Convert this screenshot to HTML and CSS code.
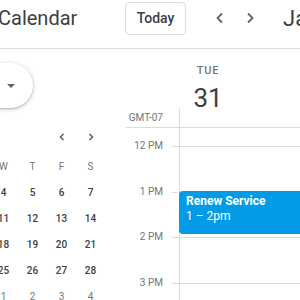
FILE: index.html
```html
<!DOCTYPE html>
<html lang="en">

<head>
    <meta charset="UTF-8">
    <meta name="viewport" content="width=device-width, initial-scale=1.0">
    <title>Calendar - Day view</title>
    <link rel="stylesheet" href="styles.css">
</head>

<body>
    <header class="topbar">
        <span class="app-name">Calendar</span>
        <button class="today-btn" type="button">Today</button>
        <nav class="nav-arrows">
            <button class="icon-btn" type="button" aria-label="Previous day">
                <svg width="12" height="12" viewBox="0 0 12 12"><path d="M8 1.5 3.5 6 8 10.5" fill="none" stroke="#5f6368" stroke-width="1.8"/></svg>
            </button>
            <button class="icon-btn" type="button" aria-label="Next day">
                <svg width="12" height="12" viewBox="0 0 12 12"><path d="M4 1.5 8.5 6 4 10.5" fill="none" stroke="#5f6368" stroke-width="1.8"/></svg>
            </button>
        </nav>
        <span class="period">January 31, 2017</span>
    </header>

    <div class="layout">
        <aside class="sidebar">
            <button class="create-btn" type="button">
                <span class="create-label">Create</span>
                <span class="create-caret"></span>
            </button>

            <div class="mini-cal">
                <div class="mini-head">
                    <span class="mini-title">January 2017</span>
                    <button class="mini-arrow" type="button" aria-label="Previous month">
                        <svg width="8" height="8" viewBox="0 0 8 8"><path d="M5.5 1 2.5 4 5.5 7" fill="none" stroke="#5f6368" stroke-width="1.5"/></svg>
                    </button>
                    <button class="mini-arrow" type="button" aria-label="Next month">
                        <svg width="8" height="8" viewBox="0 0 8 8"><path d="M2.5 1 5.5 4 2.5 7" fill="none" stroke="#5f6368" stroke-width="1.5"/></svg>
                    </button>
                </div>
                <div class="mini-grid">
                    <span class="dow">S</span><span class="dow">M</span><span class="dow">T</span><span class="dow">W</span><span class="dow">T</span><span class="dow">F</span><span class="dow">S</span>
                    <span>1</span><span>2</span><span>3</span><span>4</span><span>5</span><span>6</span><span>7</span>
                    <span>8</span><span>9</span><span>10</span><span>11</span><span>12</span><span>13</span><span>14</span>
                    <span>15</span><span>16</span><span>17</span><span>18</span><span>19</span><span>20</span><span>21</span>
                    <span>22</span><span>23</span><span>24</span><span>25</span><span>26</span><span>27</span><span>28</span>
                    <span>29</span><span>30</span><span class="today">31</span><span class="other">1</span><span class="other">2</span><span class="other">3</span><span class="other">4</span>
                </div>
            </div>
        </aside>

        <main class="day-view">
            <div class="day-head">
                <div class="day-label">
                    <div class="day-dow">TUE</div>
                    <div class="day-num">31</div>
                </div>
            </div>

            <div class="allday">
                <div class="tz">GMT-07</div>
                <div class="allday-cell"></div>
            </div>

            <div class="grid">
                <div class="time-gutter">
                    <div class="hour"><span class="hour-label">12 PM</span><span class="tick"></span></div>
                    <div class="hour"><span class="hour-label">1 PM</span><span class="tick"></span></div>
                    <div class="hour"><span class="hour-label">2 PM</span><span class="tick"></span></div>
                    <div class="hour"><span class="hour-label">3 PM</span><span class="tick"></span></div>
                </div>
                <div class="day-col">
                    <div class="slot"></div>
                    <div class="slot"></div>
                    <div class="slot"></div>
                    <div class="slot"></div>
                    <div class="event">
                        <div class="event-title">Renew Service</div>
                        <div class="event-time">1 – 2pm</div>
                    </div>
                </div>
            </div>
        </main>
    </div>
</body>

</html>
```

FILE: styles.css
```css
:root {
    --text-main: #3c4043;
    --text-soft: #70757a;
    --line: #dadce0;
    --event-blue: #039be5;
}

* {
    margin: 0;
    padding: 0;
    box-sizing: border-box;
}

html,
body {
    width: 300px;
    height: 300px;
    overflow: hidden;
    background: #ffffff;
}

body {
    font-family: Roboto, "Liberation Sans", Arial, sans-serif;
    color: var(--text-main);
}

button {
    font-family: inherit;
    background: none;
    border: none;
    cursor: pointer;
}

/* top bar */
.topbar {
    display: flex;
    align-items: center;
    height: 49px;
    padding-bottom: 12px;
    border-bottom: 1px solid var(--line);
    white-space: nowrap;
}

.app-name {
    flex: 0 0 127px;
    margin-left: -2px;
    font-size: 20px;
    color: var(--text-main);
}

.today-btn {
    flex: 0 0 61px;
    height: 33px;
    border: 1px solid var(--line);
    border-radius: 4px;
    font-size: 14px;
    font-weight: 500;
    color: var(--text-main);
}

.nav-arrows {
    display: flex;
    gap: 2px;
    margin-left: 20px;
}

.icon-btn {
    width: 28px;
    height: 28px;
    display: flex;
    align-items: center;
    justify-content: center;
}

.period {
    margin-left: 19px;
    font-size: 22px;
    color: var(--text-main);
}

/* body */
.layout {
    display: flex;
}

.sidebar {
    flex: 0 0 126px;
}

.create-btn {
    display: flex;
    align-items: center;
    justify-content: flex-end;
    width: 100px;
    height: 45px;
    margin: 14px 0 0 -67px;
    padding-right: 18px;
    border-radius: 24px;
    background: #ffffff;
    box-shadow: 0 1px 2px rgba(60, 64, 67, 0.3), 0 1px 4px 1px rgba(60, 64, 67, 0.15);
}

.create-label {
    display: none;
}

.create-caret {
    width: 0;
    height: 0;
    border-left: 4px solid transparent;
    border-right: 4px solid transparent;
    border-top: 4px solid #5f6368;
}

.mini-cal {
    width: 203px;
    margin: 15px 0 0 -98px;
}

.mini-head {
    display: flex;
    align-items: center;
    height: 28px;
}

.mini-title {
    flex: 1;
    font-size: 13px;
    font-weight: 500;
    padding-left: 10px;
}

.mini-arrow {
    width: 29px;
    height: 28px;
    display: flex;
    align-items: center;
    justify-content: center;
}

.mini-grid {
    display: grid;
    grid-template-columns: repeat(7, 29px);
    grid-auto-rows: 26px;
    margin-top: 3px;
    font-size: 10px;
    font-weight: 500;
    text-align: center;
}

.mini-grid span {
    line-height: 26px;
}

.mini-grid .dow {
    color: var(--text-soft);
    font-weight: 400;
}

.mini-grid .other {
    color: var(--text-soft);
    font-weight: 400;
}

.mini-grid .today {
    color: #ffffff;
}

/* day view */
.day-view {
    flex: 1;
    min-width: 0;
}

.day-head {
    height: 59px;
    padding: 14px 0 0 59px;
}

.day-label {
    width: 46px;
    text-align: center;
}

.day-dow {
    font-size: 11px;
    line-height: 16px;
    font-weight: 500;
    letter-spacing: 0.8px;
    color: var(--text-soft);
}

.day-num {
    margin-top: 3px;
    font-size: 26px;
    line-height: 32px;
    color: var(--text-main);
}

.allday {
    display: flex;
    height: 20px;
    border-bottom: 1px solid var(--line);
}

.tz {
    flex: 0 0 53px;
    padding-right: 16px;
    text-align: right;
    font-size: 10px;
    line-height: 19px;
    color: var(--text-soft);
}

.allday-cell {
    flex: 1;
    border-left: 1px solid var(--line);
}

.grid {
    display: flex;
}

.time-gutter {
    flex: 0 0 53px;
    padding-top: 18px;
}

.hour {
    display: flex;
    align-items: flex-start;
    height: 45.5px;
}

.hour-label {
    flex: 1;
    padding-right: 9px;
    text-align: right;
    font-size: 10px;
    line-height: 12px;
    color: var(--text-soft);
    transform: translateY(-6px);
}

.tick {
    flex: 0 0 7px;
    border-top: 1px solid var(--line);
}

.day-col {
    flex: 1;
    position: relative;
    padding-top: 18px;
    border-left: 1px solid var(--line);
}

.slot {
    height: 45.5px;
    border-top: 1px solid var(--line);
}

.event {
    position: absolute;
    top: 63px;
    left: -1px;
    right: -12px;
    height: 43px;
    padding: 3px 7px;
    border-radius: 4px;
    background: var(--event-blue);
    color: #ffffff;
    font-size: 12px;
    line-height: 15px;
}

.event-title {
    font-weight: 700;
}
```
